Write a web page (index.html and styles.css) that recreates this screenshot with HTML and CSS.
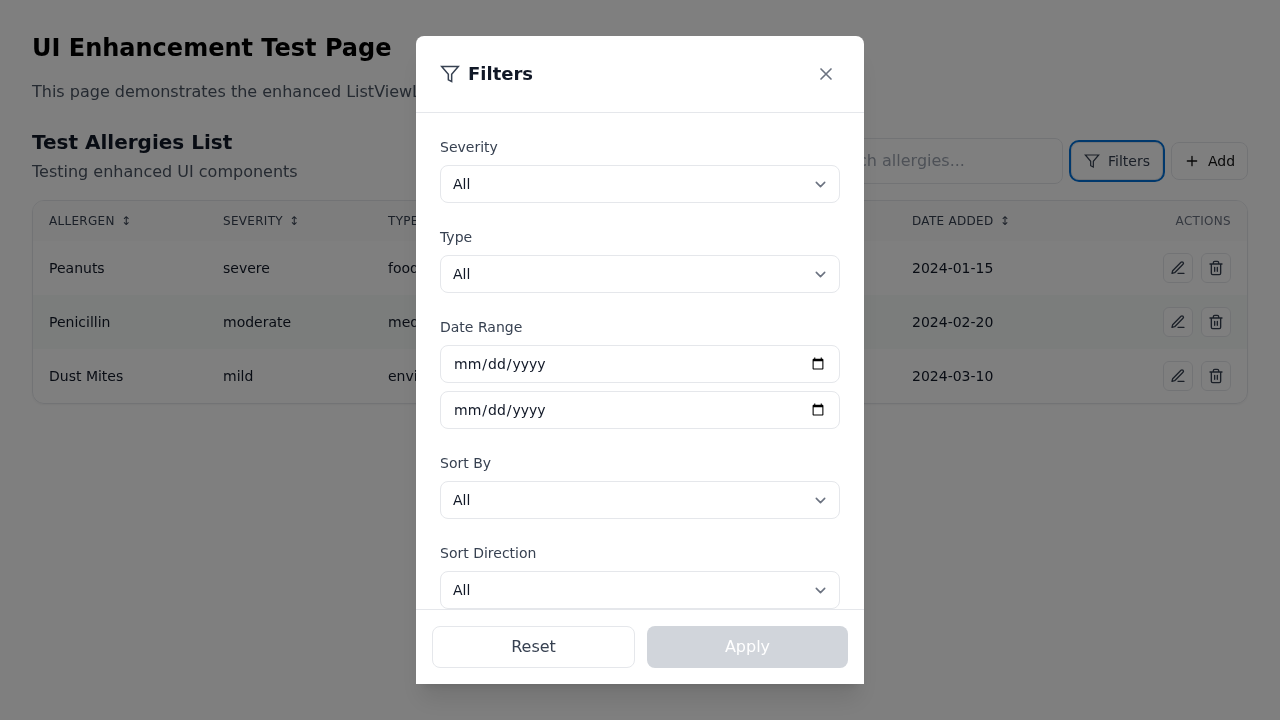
FILE: index.html
```html
<!DOCTYPE html>
<html lang="en">
<head>
<meta charset="utf-8">
<title>UI Enhancement Test Page</title>
<link rel="stylesheet" href="styles.css">
</head>
<body>
<svg class="sprite" aria-hidden="true">
  <symbol id="funnel" viewBox="0 0 24 24"><path d="M22 3H2l8 9.460V19l4 2v-8.540L22 3z"/></symbol>
  <symbol id="edit" viewBox="0 0 24 24"><path d="M12 20h9"/><path d="M16.500 3.500a2.120 2.120 0 0 1 3 3L7 19l-4 1 1-4 12.500-12.500z"/></symbol>
  <symbol id="trash" viewBox="0 0 24 24"><path d="M3 6h18M19 6v14a2 2 0 0 1-2 2H7a2 2 0 0 1-2-2V6M8 6V4a2 2 0 0 1 2-2h4a2 2 0 0 1 2 2v2M10 11v6M14 11v6"/></symbol>
  <symbol id="chevron" viewBox="0 0 20 20"><path d="m6 8 4 4 4-4"/></symbol>
</svg>
<main class="page">
  <h1 class="page-title">UI Enhancement Test Page</h1>
  <p class="page-intro">This page demonstrates the enhanced ListViewLayout.</p>
  <div class="list-header">
    <div class="list-heading">
      <h2 class="list-title">Test Allergies List</h2>
      <p class="list-subtitle">Testing enhanced UI components</p>
    </div>
    <div class="toolbar">
      <input class="search" type="text" placeholder="Search allergies...">
      <button class="btn btn-filters"><svg class="icon icon-funnel"><use href="#funnel"/></svg>Filters</button>
      <button class="btn btn-add"><svg class="icon" viewBox="0 0 24 24"><path d="M12 5v14M5 12h14"/></svg>Add</button>
    </div>
  </div>
  <div class="table-card">
    <table class="table">
      <colgroup><col class="c1"><col class="c2"><col class="c3"><col class="c4"><col class="c5"></colgroup>
      <thead><tr><th>ALLERGEN <span class="sort">↕</span></th><th>SEVERITY <span class="sort">↕</span></th><th>TYPE <span class="sort">↕</span></th><th>DATE ADDED <span class="sort">↕</span></th><th class="th-actions">ACTIONS</th></tr></thead>
      <tbody>
        <tr><td>Peanuts</td><td>severe</td><td>food</td><td>2024-01-15</td><td><div class="actions"><button class="icon-btn"><svg class="icon"><use href="#edit"/></svg></button><button class="icon-btn"><svg class="icon"><use href="#trash"/></svg></button></div></td></tr>
        <tr><td>Penicillin</td><td>moderate</td><td>medication</td><td>2024-02-20</td><td><div class="actions"><button class="icon-btn"><svg class="icon"><use href="#edit"/></svg></button><button class="icon-btn"><svg class="icon"><use href="#trash"/></svg></button></div></td></tr>
        <tr><td>Dust Mites</td><td>mild</td><td>environmental</td><td>2024-03-10</td><td><div class="actions"><button class="icon-btn"><svg class="icon"><use href="#edit"/></svg></button><button class="icon-btn"><svg class="icon"><use href="#trash"/></svg></button></div></td></tr>
      </tbody>
    </table>
  </div>
</main>
<div class="overlay">
  <section class="modal">
    <header class="modal-header">
      <h2 class="modal-title"><svg class="icon icon-title"><use href="#funnel"/></svg>Filters</h2>
      <button class="close"><svg class="icon icon-close" viewBox="0 0 24 24"><path d="M18 6 6 18M6 6l12 12"/></svg></button>
    </header>
    <div class="modal-body">
      <div class="field"><label class="label">Severity</label><div class="select">All<svg class="icon chevron"><use href="#chevron"/></svg></div></div>
      <div class="field"><label class="label">Type</label><div class="select">All<svg class="icon chevron"><use href="#chevron"/></svg></div></div>
      <div class="field"><label class="label">Date Range</label><input class="date" type="date"><input class="date" type="date"></div>
      <div class="field"><label class="label">Sort By</label><div class="select">All<svg class="icon chevron"><use href="#chevron"/></svg></div></div>
      <div class="field"><label class="label">Sort Direction</label><div class="select">All<svg class="icon chevron"><use href="#chevron"/></svg></div></div>
    </div>
    <footer class="modal-footer">
      <button class="reset">Reset</button>
      <button class="apply">Apply</button>
    </footer>
  </section>
</div>
</body>
</html>
```
FILE: styles.css
```css
*, *::before, *::after { box-sizing: border-box; margin: 0; padding: 0; }
body { font-family: "DejaVu Sans", sans-serif; font-size: 16px; line-height: 24px; background: #fff; color: #000; height: 720px; overflow: hidden; }
button, input { font: inherit; color: inherit; background: none; border: 0; }
.sprite { display: none; }
.icon { width: 16px; height: 16px; flex: none; fill: none; stroke: currentColor; stroke-width: 2; stroke-linecap: round; stroke-linejoin: round; }

.page { padding: 32px; will-change: transform; }
.page-title { font-size: 24px; line-height: 32px; font-weight: 700; margin-bottom: 16px; }
.page-intro { color: #4b5563; margin-bottom: 24px; }
.list-header { display: flex; justify-content: space-between; align-items: center; margin-bottom: 16px; height: 56px; }
.list-heading { padding-top: 2px; }
.list-title { font-size: 20px; line-height: 28px; font-weight: 700; color: #111827; }
.list-subtitle { color: #4b5563; margin-top: 2px; line-height: 28px; }
.toolbar { display: flex; align-items: center; gap: 8px; padding-top: 10px; }
.search { width: 256px; height: 46px; padding: 0 14px 2px; border: 1px solid #e5e7eb; border-radius: 8px; }
.search::placeholder { color: #9ca3af; }
.btn { display: flex; align-items: center; gap: 8px; height: 38px; border: 1px solid #e5e7eb; border-radius: 8px; font-size: 14px; line-height: 20px; padding: 0 12px; }
.btn-filters { width: 92px; color: #374151; outline: 2px solid #0070d8; }
.icon-funnel { stroke-width: 1.800; stroke-linejoin: miter; }
.btn-add { width: 77px; color: #111; }

.table-card { border: 1px solid #e5e7eb; border-radius: 12px; overflow: hidden; box-shadow: 0 1px 2px rgba(0,0,0,.05); }
.table { width: 100%; table-layout: fixed; border-collapse: collapse; font-size: 14px; line-height: 20px; color: #111827; }
.c1 { width: 174px; } .c2 { width: 165px; } .c3 { width: 524px; } .c4 { width: 200px; }
.table th { height: 40px; padding: 0 16px; background: #fafafa; font-size: 12px; line-height: 16px; font-weight: 400; text-align: left; color: #374151; letter-spacing: .3px; }
.table .th-actions { text-align: right; color: #6b7280; }
.sort { margin-left: 2px; }
.table td { height: 54px; padding: 0 16px; }
.table tbody tr:nth-child(even) { background: #f6fbf9; }
.actions { display: flex; justify-content: flex-end; gap: 8px; }
.icon-btn { display: grid; place-items: center; width: 30px; height: 30px; border: 1px solid #e5e7eb; border-radius: 6px; color: #374151; background: #fff; }

.overlay { position: fixed; inset: 0; display: flex; align-items: center; justify-content: center; background: rgba(0,0,0,.5); }
.modal { display: flex; flex-direction: column; width: 448px; height: 648px; background: #fff; border-radius: 8px 8px 0 0; box-shadow: 0 20px 25px -5px rgba(0,0,0,.1), 0 8px 10px -6px rgba(0,0,0,.1); }
.modal-header { display: flex; align-items: center; justify-content: space-between; height: 77px; padding: 0 24px; border-bottom: 1px solid #e5e7eb; }
.modal-title { display: flex; align-items: center; gap: 8px; font-size: 18px; line-height: 28px; font-weight: 600; color: #111827; }
.icon-title { width: 20px; height: 20px; color: #374151; stroke-width: 1.800; stroke-linejoin: miter; }
.close { display: grid; place-items: center; width: 28px; height: 28px; color: #6b7280; }
.icon-close { width: 20px; height: 20px; }
.modal-body { flex: 1; min-height: 0; overflow: hidden; display: flex; flex-direction: column; gap: 24px; padding: 24px; }
.field { display: flex; flex-direction: column; gap: 8px; flex: none; }
.label { font-size: 14px; line-height: 20px; color: #374151; }
.select, .date { height: 38px; padding: 0 12px; border: 1px solid #e5e7eb; border-radius: 8px; font-size: 14px; line-height: 20px; color: #111827; }
.select { display: flex; align-items: center; justify-content: space-between; }
.date { display: block; width: 100%; }
.chevron { width: 21px; height: 21px; margin-right: -4px; color: #6b7280; stroke-width: 1.500; }
.modal-footer { display: flex; gap: 12px; height: 75px; padding: 16px; border-top: 1px solid #e5e7eb; }
.reset, .apply { height: 42px; border-radius: 8px; }
.reset { width: 203px; border: 1px solid #e5e7eb; color: #374151; }
.apply { width: 201px; background: #d1d5db; color: #fff; }
```
